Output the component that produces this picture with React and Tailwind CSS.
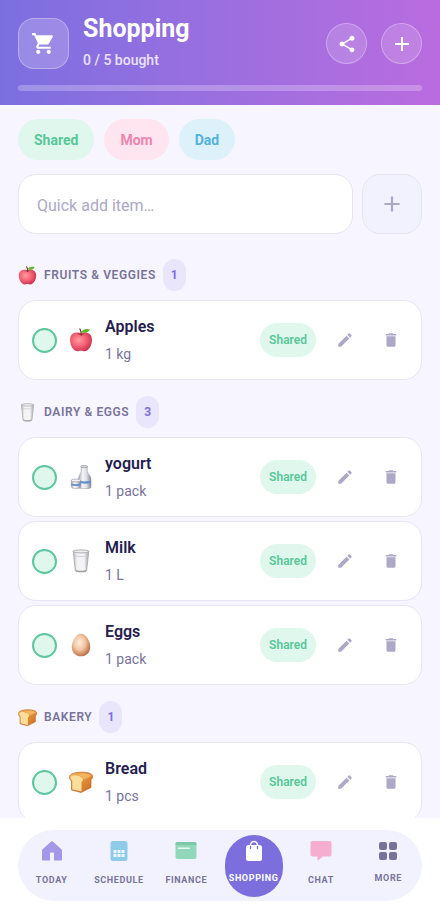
import { MdShoppingCart, MdShare, MdAdd, MdEdit, MdDelete } from 'react-icons/md';

function Apple({ className }) {
  return (
    <svg viewBox="0 0 24 24" className={className} aria-hidden="true">
      <defs>
        <radialGradient id="apple" cx="0.4" cy="0.4" r="0.7">
          <stop offset="0" stopColor="#ff9d9f" />
          <stop offset="0.55" stopColor="#f05a70" />
          <stop offset="1" stopColor="#bf2848" />
        </radialGradient>
      </defs>
      <path d="M12 5.5C9.500 3.800 1 3.700 1 12c0 6 4 11.300 7.500 11.300 1.500 0 2-.5 3.500-.5s2 .5 3.500.5C19 23.300 23 18 23 12c0-8.300-8.500-8.200-11-6.500z" fill="url(#apple)" />
      <path d="M8 5.800c2 1.800 6 1.800 8 0-1.500-.7-3-.6-4-.1-1-.5-2.500-.6-4 .1z" fill="#a31b35" opacity=".6" />
      <path d="M12.300 7c.1-2-.3-4-1.400-6" stroke="#6b3a1e" strokeWidth="1.300" fill="none" strokeLinecap="round" />
      <path d="M12.500 4.200C13.500 1 17.500.3 21 1.500c-1.500 3-5 4.200-8.500 2.700z" fill="#63b52e" />
    </svg>
  );
}

function Glass({ className }) {
  return (
    <svg viewBox="0 0 24 24" className={className} aria-hidden="true">
      <defs>
        <linearGradient id="glass" x1="0" x2="1" y1="0" y2="0">
          <stop offset="0" stopColor="#b9b9bd" />
          <stop offset="0.25" stopColor="#f3f3f5" />
          <stop offset="0.7" stopColor="#f5f5f7" />
          <stop offset="1" stopColor="#a2a2a8" />
        </linearGradient>
      </defs>
      <path d="M4.200 2.200h15.600l-2.200 19.500c-.2 1.700-11 1.700-11.200 0z" fill="url(#glass)" stroke="#a3a3a8" strokeWidth=".8" />
      <path d="M6.600 20.700c2 1.300 8.800 1.300 10.800 0l-.2 1.500c-1 1.200-9.400 1.200-10.400 0z" fill="#a0a0a6" />
      <ellipse cx="12" cy="2.400" rx="7.900" ry="1.500" fill="#efeff1" stroke="#a0a0a6" strokeWidth=".8" />
      <path d="M5.200 6.500c3 1.300 10.600 1.300 13.600 0" stroke="#c9c9ce" strokeWidth=".8" fill="none" />
    </svg>
  );
}

function Bottle({ className }) {
  return (
    <svg viewBox="0 0 24 24" className={className} aria-hidden="true">
      <defs>
        <linearGradient id="bottle" x1="0" x2="1" y1="0" y2="0">
          <stop offset="0" stopColor="#a9abb6" />
          <stop offset="0.35" stopColor="#f6f6f8" />
          <stop offset="0.65" stopColor="#dcdde3" />
          <stop offset="1" stopColor="#85879a" />
        </linearGradient>
      </defs>
      <path d="M12.200 1.500h6v4.700c0 2.200 3.800 4.300 3.800 8v8c0 2-12.500 2-12.500 0v-8c0-3.700 2.700-5.800 2.700-8z" fill="url(#bottle)" stroke="#8d8f9f" strokeWidth=".5" />
      <path d="M9.500 15.500c3 1.200 9.500 1.200 12.500 0v2.300c-3 1.200-9.500 1.200-12.500 0z" fill="#5f8ccd" />
      <ellipse cx="15.200" cy="1.600" rx="3.500" ry="1.100" fill="#d9dae1" stroke="#85879a" strokeWidth=".6" />
      <path d="M2.300 15.500h9.200v6.300c0 2.400-9.200 2.400-9.200 0z" fill="url(#bottle)" stroke="#8d8f9f" strokeWidth=".5" />
      <path d="M2.300 18.500c2.500 1 6.700 1 9.200 0v1.800c-2.500 1-6.700 1-9.200 0z" fill="#5f8ccd" />
      <ellipse cx="6.900" cy="15.500" rx="4.800" ry="1.400" fill="#f2f2f5" stroke="#8d8f9f" strokeWidth=".6" />
    </svg>
  );
}

function Egg({ className }) {
  return (
    <svg viewBox="0 0 24 24" className={className} aria-hidden="true">
      <defs>
        <radialGradient id="egg" cx="0.42" cy="0.4" r="0.65">
          <stop offset="0" stopColor="#fff0e2" />
          <stop offset="0.5" stopColor="#f3c29e" />
          <stop offset="1" stopColor="#b3683c" />
        </radialGradient>
      </defs>
      <path d="M12 .8c5 0 9.200 7.800 9.200 13.200 0 5.700-4 9.300-9.200 9.300S2.800 19.700 2.800 14C2.800 8.600 7 .8 12 .8z" fill="url(#egg)" />
    </svg>
  );
}

function Bread({ className }) {
  return (
    <svg viewBox="0 0 24 24" className={className} aria-hidden="true">
      <defs>
        <linearGradient id="crust" x1="0" x2="1" y1="0" y2="1">
          <stop offset="0" stopColor="#f6b153" />
          <stop offset="1" stopColor="#cb6a1c" />
        </linearGradient>
      </defs>
      <path d="M.5 7C.5 3.500 7 2 13 2.200c6 .1 10.700 1.300 10.700 4.300 0 2-1.200 2.700-1.700 3.300v7.700L12 22.500 2.500 20V11C1.500 10.300.5 9 .5 7z" fill="url(#crust)" stroke="#a85a1c" strokeWidth=".6" />
      <path d="M1.500 7.400c0-2 3-2.600 6.300-2 3.500.6 6.200 1.800 6.200 4 0 1.400-1.500 2-1.500 2.800v9.300l-9.200-2.300v-8.700c-.6-.7-1.800-1.400-1.800-3.100z" fill="#fbdd9c" />
      <path d="M14.800 9.400c.3-2-3.500-4.100-7-4.700 4-1.700 13-1.500 14.500 1-1.700 1.100-5.500 2.700-7.500 3.700z" fill="#fbc370" opacity=".7" />
    </svg>
  );
}

function HomeIcon() {
  return (
    <svg viewBox="0 0 22 22" className="size-[22px]" fill="#a597e8" aria-hidden="true">
      <path d="M10.200 1.600a1.200 1.200 0 0 1 1.600 0l8.600 7.600c.4.400.6.800.6 1.300v9c0 .6-.4 1-1 1h-7v-7c0-.6-.4-1-1-1h-2c-.6 0-1 .4-1 1v7H2c-.6 0-1-.4-1-1v-9c0-.5.200-.9.600-1.300z" />
    </svg>
  );
}

function CalendarIcon() {
  return (
    <svg viewBox="0 0 22 22" className="size-[22px]" aria-hidden="true">
      <rect x="2.500" y="1" width="17" height="20" rx="2.500" fill="#8ecbea" />
      <g fill="#ecf6fd">
        <rect x="5.500" y="10" width="3" height="3" />
        <rect x="9.500" y="10" width="3" height="3" />
        <rect x="13.500" y="10" width="3" height="3" />
        <rect x="5.500" y="14" width="3" height="3" />
        <rect x="9.500" y="14" width="3" height="3" />
        <rect x="13.500" y="14" width="3" height="3" />
      </g>
    </svg>
  );
}

function WalletIcon() {
  return (
    <svg viewBox="0 0 22 22" className="size-[22px]" aria-hidden="true">
      <rect x="0.500" y="2" width="21" height="17" rx="2" fill="#91d7ba" />
      <path d="M.5 5V4c0-1.100.9-2 2-2h17c1.100 0 2 .9 2 2v1z" fill="#7cc9a9" />
      <rect x="2.500" y="7.500" width="12.500" height="1.500" rx=".7" fill="#e9f8f2" />
    </svg>
  );
}

function BagIcon() {
  return (
    <svg viewBox="0 0 22 22" className="size-[22px]" aria-hidden="true">
      <rect x="3" y="5" width="16" height="16" rx="2.500" fill="#fff" />
      <path d="M7.500 6V5a3.500 3.500 0 0 1 7 0v1" fill="none" stroke="#fff" strokeWidth="1.500" />
      <path d="M7.500 6.500v2M14.500 6.500v2" stroke="#7c6fdd" strokeWidth="1.300" strokeLinecap="round" />
    </svg>
  );
}

function ChatIcon() {
  return (
    <svg viewBox="0 0 22 22" className="size-[22px]" fill="#f5aed0" aria-hidden="true">
      <path d="M2.500 1h17c1.100 0 2 .9 2 2v11.500c0 1.100-.9 2-2 2h-6.700l-4.600 3.700c-.4.300-.7.100-.7-.3v-3.400h-5c-1.100 0-2-.9-2-2V3c0-1.100.9-2 2-2z" />
    </svg>
  );
}

function GridIcon() {
  return (
    <svg viewBox="0 0 22 22" className="size-[22px]" fill="#767298" aria-hidden="true">
      <rect x="2" y="2" width="8" height="8" rx="2" />
      <rect x="12" y="2" width="8" height="8" rx="2" />
      <rect x="2" y="12" width="8" height="8" rx="2" />
      <rect x="12" y="12" width="8" height="8" rx="2" />
    </svg>
  );
}

const filters = [
  { name: 'Shared', className: 'bg-[#dff7ec] text-[#58c799]' },
  { name: 'Mom', className: 'bg-[#ffe5ef] text-[#ea86b0]' },
  { name: 'Dad', className: 'bg-[#ddf1fb] text-[#54b1dc]' },
];

const sections = [
  {
    title: 'Fruits & Veggies',
    Icon: Apple,
    items: [{ name: 'Apples', amount: '1 kg', Icon: Apple }],
  },
  {
    title: 'Dairy & Eggs',
    Icon: Glass,
    items: [
      { name: 'yogurt', amount: '1 pack', Icon: Bottle },
      { name: 'Milk', amount: '1 L', Icon: Glass },
      { name: 'Eggs', amount: '1 pack', Icon: Egg },
    ],
  },
  {
    title: 'Bakery',
    Icon: Bread,
    items: [{ name: 'Bread', amount: '1 pcs', Icon: Bread }],
  },
];

const tabs = [
  { label: 'Today', Icon: HomeIcon, className: 'gap-[10px] text-[#77739a]' },
  { label: 'Schedule', Icon: CalendarIcon, className: 'gap-[10px] text-[#77739a]' },
  { label: 'Finance', Icon: WalletIcon, className: 'gap-[10px] text-[#77739a]' },
  { label: 'Shopping', Icon: BagIcon, className: 'gap-2 bg-[#7c6fdd] text-white' },
  { label: 'Chat', Icon: ChatIcon, className: 'gap-[10px] text-[#77739a]' },
  { label: 'More', Icon: GridIcon, className: 'gap-2 text-[#77739a]' },
];

function Header() {
  return (
    <header className="shrink-0 bg-linear-to-r from-[#7b6fe0] to-[#b96cdf] px-[18px] py-[14px] text-white">
      <div className="flex items-center">
        <div className="flex size-[51px] items-center justify-center rounded-2xl border border-white/30 bg-white/20">
          <MdShoppingCart className="size-[25px]" />
        </div>
        <div className="ml-[14px] flex-1 pb-[3px]">
          <h1 className="text-[25px] leading-[30px] font-bold">Shopping</h1>
          <p className="pt-[6px] text-sm leading-5 font-medium text-white/80">0 / 5 bought</p>
        </div>
        <div className="flex gap-[14px]">
          <button aria-label="Share" className="flex size-[41px] items-center justify-center rounded-full border border-white/30 bg-white/15">
            <MdShare className="size-5" />
          </button>
          <button aria-label="Add item" className="flex size-[41px] items-center justify-center rounded-full border border-white/30 bg-white/15">
            <MdAdd className="size-6" />
          </button>
        </div>
      </div>
      <div className="mt-3 h-[6px] rounded-full bg-white/25" />
    </header>
  );
}

function ItemCard({ name, amount, Icon }) {
  return (
    <li className="flex h-20 items-center rounded-[18px] border border-[#e7e4f4] bg-white px-[13px]">
      <input
        type="checkbox"
        aria-label={name}
        className="size-[25px] shrink-0 appearance-none rounded-full border-2 border-[#5cc79d] bg-[#dff7ec] checked:bg-[#5cc79d]"
      />
      <Icon className="ml-3 size-6 shrink-0" />
      <div className="ml-3 min-w-0 flex-1 pb-px">
        <h3 className="text-base leading-6 font-semibold text-[#251d4f]">{name}</h3>
        <p className="pt-[5px] text-sm leading-5 text-[#77739a]">{amount}</p>
      </div>
      <span className="rounded-full bg-[#dff7ec] px-[9px] py-2 text-xs leading-[18px] font-semibold text-[#58c799]">
        Shared
      </span>
      <button aria-label={`Edit ${name}`} className="ml-3 flex size-[34px] items-center justify-center text-[#aca8c6]">
        <MdEdit className="size-[18px]" />
      </button>
      <button aria-label={`Delete ${name}`} className="ml-3 flex size-[34px] items-center justify-center text-[#aca8c6]">
        <MdDelete className="size-[18px]" />
      </button>
    </li>
  );
}

function Section({ title, Icon, items }) {
  return (
    <section>
      <h2 className="mb-[9px] flex items-center text-xs font-semibold tracking-wider text-[#77739a] uppercase">
        <Icon className="mr-[7px] size-[19px]" />
        {title}
        <span className="ml-[7px] flex h-8 w-[23px] items-center justify-center rounded-full bg-[#e9e5fa] font-bold tracking-normal text-[#7c6fdd]">
          {items.length}
        </span>
      </h2>
      <ul className="flex flex-col gap-1">
        {items.map((item) => (
          <ItemCard key={item.name} {...item} />
        ))}
      </ul>
    </section>
  );
}

function TabBar() {
  return (
    <nav className="shrink-0 bg-white px-[18px] pt-3 pb-[13px]">
      <div className="grid h-[71px] grid-cols-6 items-center rounded-full bg-[#f2f2fe]">
        {tabs.map(({ label, Icon, className }) => (
          <button
            key={label}
            className={`mx-auto flex h-[62px] w-[58px] flex-col items-center rounded-full pt-[5px] text-[9px] leading-4 font-bold tracking-[0.07em] uppercase ${className}`}
          >
            <Icon />
            {label}
          </button>
        ))}
      </div>
    </nav>
  );
}

function App() {
  return (
    <div className="flex h-dvh flex-col bg-[#f7f5ff] font-['Roboto',sans-serif]">
      <Header />
      <main className="min-h-0 flex-1 overflow-y-auto px-[18px] pt-[14px] pb-4 [scrollbar-width:none]">
        <div className="flex gap-[10px]">
          {filters.map((filter) => (
            <button key={filter.name} className={`h-[41px] rounded-full px-4 text-sm font-bold ${filter.className}`}>
              {filter.name}
            </button>
          ))}
        </div>
        <form className="mt-[14px] flex gap-[9px]" onSubmit={(e) => e.preventDefault()}>
          <input
            type="text"
            aria-label="Quick add item"
            placeholder="Quick add item…"
            className="h-[60px] min-w-0 flex-1 rounded-[18px] border border-[#e7e4f4] bg-white px-[18px] pt-[2px] text-base text-[#251d4f] placeholder:text-[#aca8c6]"
          />
          <button aria-label="Add" className="flex size-[60px] items-center justify-center rounded-[18px] border border-[#e7e4f4] bg-[#f2f2fe] text-[#aca8c6]">
            <MdAdd className="size-[26px]" />
          </button>
        </form>
        <div className="mt-[25px] flex flex-col gap-4">
          {sections.map((section) => (
            <Section key={section.title} {...section} />
          ))}
        </div>
      </main>
      <TabBar />
    </div>
  );
}

export default App;
